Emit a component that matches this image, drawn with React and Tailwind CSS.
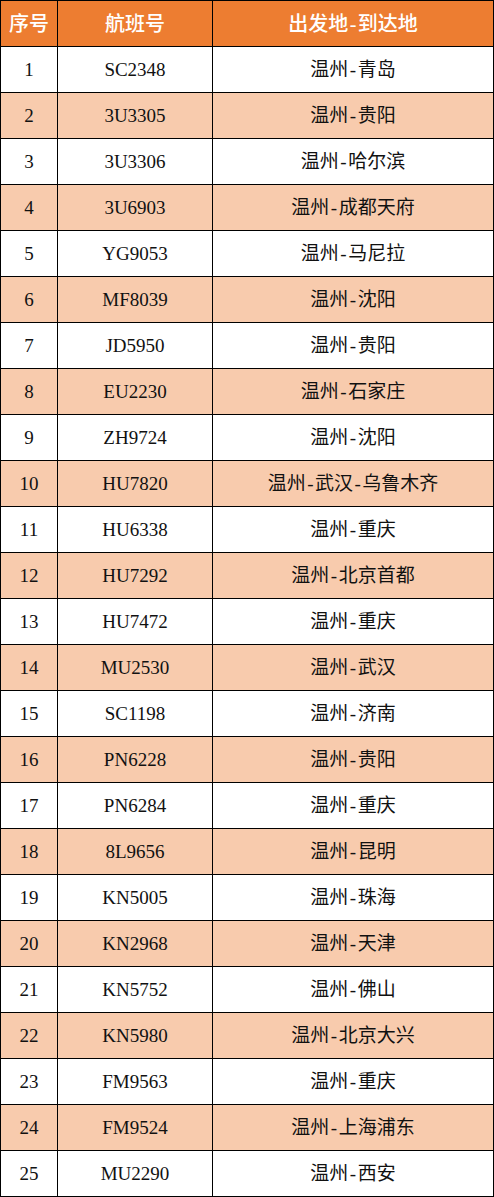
import React from 'react';

const flights = [
    ['SC2348', '温州-青岛'],
    ['3U3305', '温州-贵阳'],
    ['3U3306', '温州-哈尔滨'],
    ['3U6903', '温州-成都天府'],
    ['YG9053', '温州-马尼拉'],
    ['MF8039', '温州-沈阳'],
    ['JD5950', '温州-贵阳'],
    ['EU2230', '温州-石家庄'],
    ['ZH9724', '温州-沈阳'],
    ['HU7820', '温州-武汉-乌鲁木齐'],
    ['HU6338', '温州-重庆'],
    ['HU7292', '温州-北京首都'],
    ['HU7472', '温州-重庆'],
    ['MU2530', '温州-武汉'],
    ['SC1198', '温州-济南'],
    ['PN6228', '温州-贵阳'],
    ['PN6284', '温州-重庆'],
    ['8L9656', '温州-昆明'],
    ['KN5005', '温州-珠海'],
    ['KN2968', '温州-天津'],
    ['KN5752', '温州-佛山'],
    ['KN5980', '温州-北京大兴'],
    ['FM9563', '温州-重庆'],
    ['FM9524', '温州-上海浦东'],
    ['MU2290', '温州-西安'],
];

// split route so the dash gets a little extra room like the original
const Route = ({ text }) => {
    const parts = text.split('-');
    return (
        <span>
            {parts.map((p, i) => (
                <React.Fragment key={i}>
                    {i > 0 && <span className="mx-[1.5px]">-</span>}
                    {p}
                </React.Fragment>
            ))}
        </span>
    );
};

const App = () => {
    return (
        <div
            className="grid w-[494px] grid-cols-[56px_154px_280px] auto-rows-[45px] gap-px bg-black p-px text-[19px] text-[#111]"
            style={{ fontFamily: '"Liberation Serif", "Noto Sans CJK SC", serif' }}
        >
            {/* Header */}
            {['序号', '航班号', ['出发地', '到达地']].map((h, i) => (
                <div key={i} className="flex items-center justify-center bg-[#ed7d31] pt-px text-[20px] font-medium text-white">
                    {Array.isArray(h) ? <Route text={h.join('-')} /> : h}
                </div>
            ))}

            {/* Rows */}
            {flights.map(([code, route], i) => {
                const bg = i % 2 === 1 ? 'bg-[#f8cbad]' : 'bg-white';
                return (
                    <React.Fragment key={code}>
                        <div className={`flex items-center justify-center pt-[2px] ${bg}`}>{i + 1}</div>
                        <div className={`flex items-center justify-center pt-[2px] ${bg}`}>{code}</div>
                        <div className={`flex items-center justify-center pt-[2px] ${bg}`}>
                            <Route text={route} />
                        </div>
                    </React.Fragment>
                );
            })}
        </div>
    );
};

export default App;
